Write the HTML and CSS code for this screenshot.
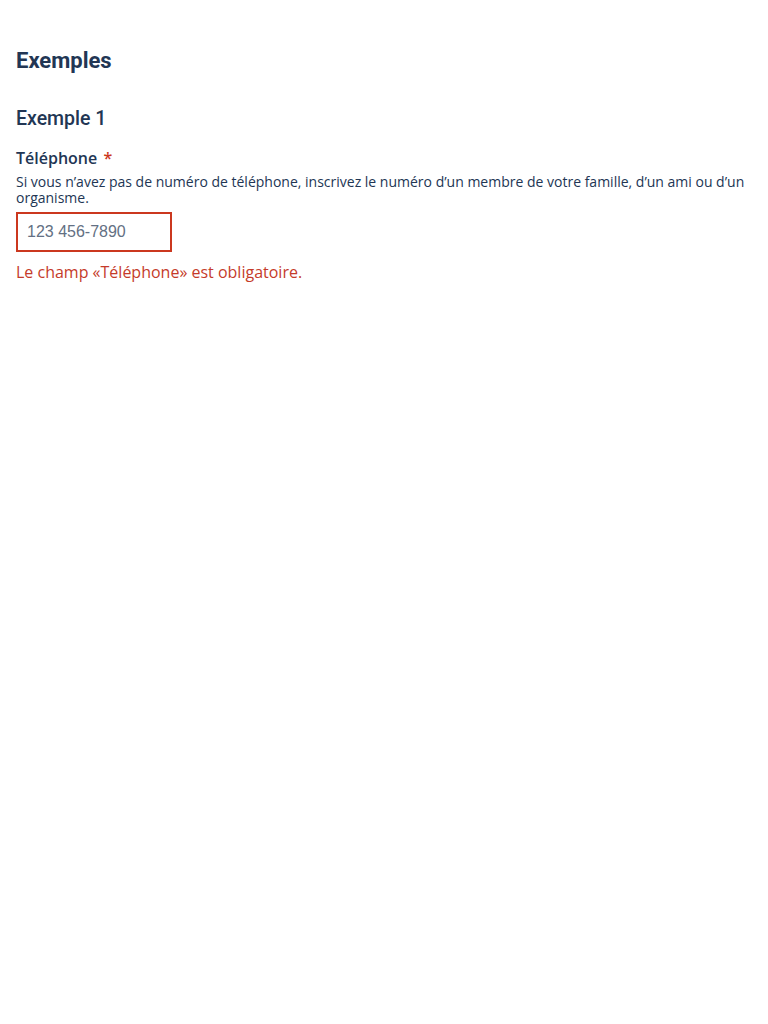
FILE: index.html
```html
<!DOCTYPE html>
<html lang="fr">
<head>
<meta charset="utf-8">
<link rel="stylesheet" href="styles.css">
</head>
<body>
<main class="page">
  <h2 class="title">Exemples</h2>
  <h3 class="subtitle">Exemple 1</h3>
  <div class="field">
    <label class="label" for="tel">Téléphone <span class="req">*</span></label>
    <p class="desc">Si vous n’avez pas de numéro de téléphone, inscrivez le numéro d’un membre de votre famille, d’un ami ou d’un organisme.</p>
    <input class="input" id="tel" type="text" placeholder="123 456-7890">
    <p class="error">Le champ «Téléphone» est obligatoire.</p>
  </div>
</main>
</body>
</html>
```
FILE: styles.css
```css
html, body { margin: 0; padding: 0; background: #fff; }
body { font-family: "Open Sans", sans-serif; color: #223654; }
.page { padding: 45px 16px 0 16px; }
.title {
  font-family: Roboto, sans-serif;
  font-weight: 700;
  font-size: 22px;
  line-height: 32px;
  margin: 0 0 30px 0;
}
.subtitle {
  font-family: Roboto, sans-serif;
  font-weight: 500;
  font-size: 19.5px;
  line-height: 24px;
  margin: 0 0 17px 0;
}
.label {
  display: block;
  font-weight: 600;
  font-size: 16px;
  line-height: 20px;
}
.req { color: #cb381f; margin-left: 2px; }
.desc {
  margin: 6px 0 6px 0;
  font-size: 14px;
  line-height: 16px;
}
.input {
  display: block;
  box-sizing: border-box;
  width: 156px;
  height: 40px;
  border: 2px solid #cb381f;
  padding: 0 9px;
  font-family: "Liberation Sans", Arial, sans-serif;
  font-size: 16px;
  color: #223654;
  margin: 0;
  outline: none;
}
.input::placeholder { color: #637083; opacity: 1; }
.error {
  margin: 9px 0 0 0;
  font-size: 16px;
  line-height: 22px;
  color: #c53b2a;
}
```
